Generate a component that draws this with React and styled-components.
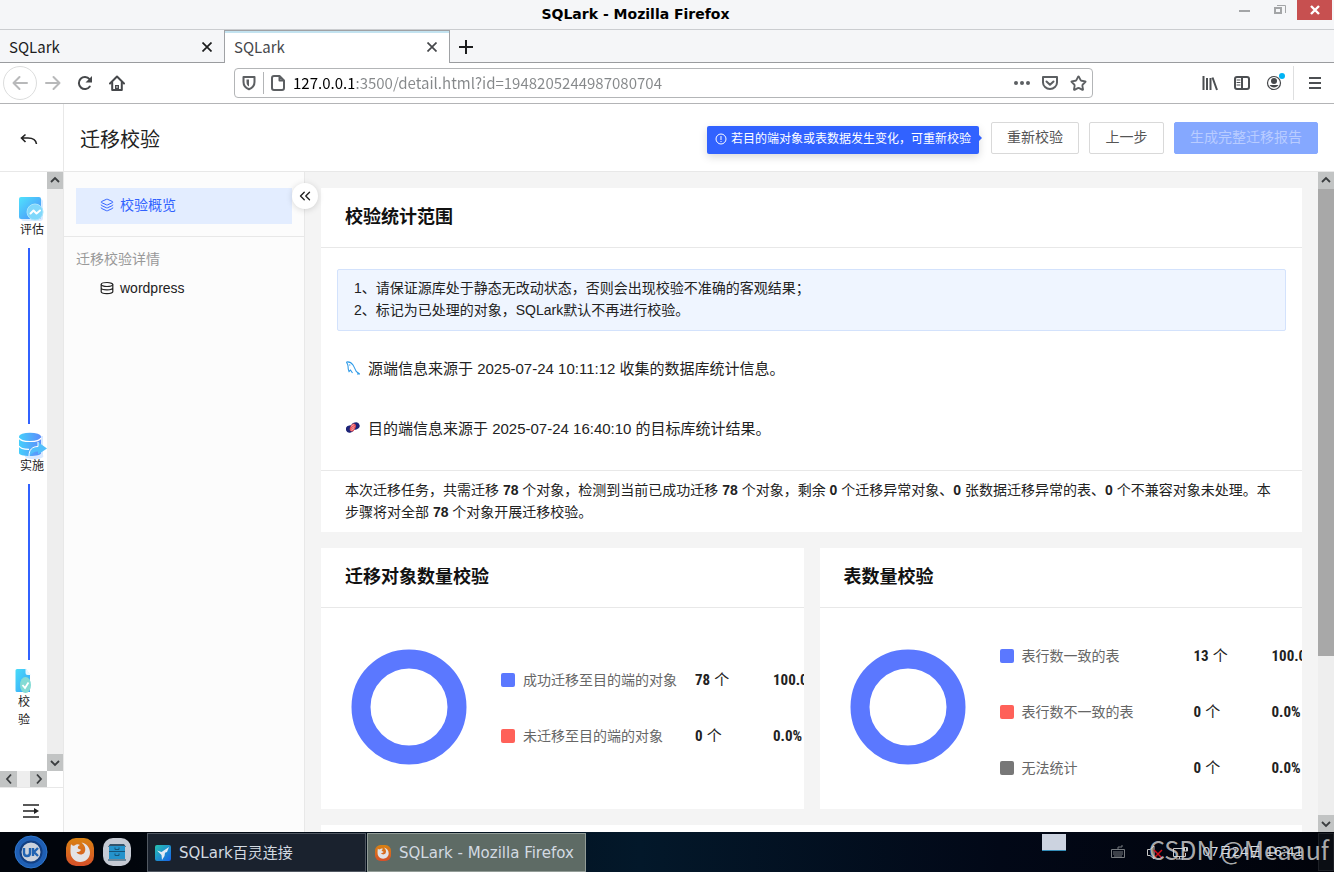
import styled, { createGlobalStyle, css } from "styled-components";
import { ChevronsLeft, Layers, Star } from "lucide-react";

const overviewNotes = [
  "1、请保证源库处于静态无改动状态，否则会出现校验不准确的客观结果；",
  "2、标记为已处理的对象，SQLark默认不再进行校验。",
];

const objectStats = [
  { label: "成功迁移至目的端的对象", count: 78, rate: "100.0%", color: "#5b78ff" },
  { label: "未迁移至目的端的对象", count: 0, rate: "0.0%", color: "#ff6159" },
];

const tableStats = [
  { label: "表行数一致的表", count: 13, rate: "100.0%", color: "#5b78ff" },
  { label: "表行数不一致的表", count: 0, rate: "0.0%", color: "#ff6159" },
  { label: "无法统计", count: 0, rate: "0.0%", color: "#777777" },
];

export default function App() {
  return (
    <>
      <GlobalStyle />
      <Screen>
        <TitleBar />
        <TabStrip />
        <NavigationBar />
        <Page>
          <PageHeader />
          <PageBody>
            <StepRail />
            <SideMenu />
            <Content />
          </PageBody>
        </Page>
        <Taskbar />
      </Screen>
    </>
  );
}

function TitleBar() {
  return (
    <StyledTitleBar>
      <WindowTitle>SQLark - Mozilla Firefox</WindowTitle>
      <WindowButtons>
        <WindowButton aria-label="最小化">
          <svg width="12" height="12" viewBox="0 0 12 12">
            <path d="M0 6h11v2H0z" fill="#a3a5a7" />
          </svg>
        </WindowButton>
        <WindowButton aria-label="还原">
          <svg width="12" height="12" viewBox="0 0 12 12" fill="none" stroke="#a3a5a7">
            <path d="M1 4h6v5H1z" strokeWidth="2" />
            <path d="M3 1.500h8.500V9" />
          </svg>
        </WindowButton>
        <WindowButton aria-label="关闭" $danger>
          <svg width="12" height="12" viewBox="0 0 12 12" stroke="#fff" strokeWidth="2.400">
            <path d="M2 2l8 8M10 2l-8 8" />
          </svg>
        </WindowButton>
      </WindowButtons>
    </StyledTitleBar>
  );
}

function TabStrip() {
  return (
    <Tabs>
      <Tab>
        <TabTitle>SQLark</TabTitle>
        <TabButton aria-label="关闭标签页">
          <CloseIcon />
        </TabButton>
      </Tab>
      <Tab $active>
        <TabTitle>SQLark</TabTitle>
        <TabButton aria-label="关闭标签页">
          <CloseIcon />
        </TabButton>
      </Tab>
      <NewTabButton aria-label="新建标签页">
        <svg width="14" height="14" viewBox="0 0 14 14" stroke="#1c1d1e" strokeWidth="2">
          <path d="M7 0v14M0 7h14" />
        </svg>
      </NewTabButton>
    </Tabs>
  );
}

function CloseIcon() {
  return (
    <svg width="10" height="10" viewBox="0 0 10 10" stroke="currentColor" strokeWidth="1.700">
      <path d="M.5.5l9 9M9.500.5l-9 9" />
    </svg>
  );
}

function NavigationBar() {
  return (
    <NavBar>
      <NavGroup>
        <BackButton aria-label="后退">
          <svg width="16" height="16" viewBox="0 0 16 16" {...line}>
            <path d="M15 8H1.500M7.500 2l-6 6 6 6" />
          </svg>
        </BackButton>
        <NavButton aria-label="前进" $muted>
          <svg width="16" height="16" viewBox="0 0 16 16" {...line}>
            <path d="M1 8h13.500M8.500 2l6 6-6 6" />
          </svg>
        </NavButton>
        <NavButton aria-label="刷新">
          <svg width="16" height="16" viewBox="0 0 16 16" {...line}>
            <path d="M12.800 11.500A6 6 0 1 1 12.500 4.200" />
            <path d="M15 1v6.500H8.500z" fill="currentColor" stroke="none" />
          </svg>
        </NavButton>
        <NavButton aria-label="主页">
          <svg width="16" height="16" viewBox="0 0 16 16" {...line}>
            <path d="M1 8.500l7-7 7 7" />
            <path d="M3.200 7.500V15h9.600V7.500" />
            <path d="M6 15v-5h4v5z" fill="currentColor" stroke="none" />
            <path d="M8 11.500v1" stroke="#fff" strokeWidth="1" />
          </svg>
        </NavButton>
      </NavGroup>
      <AddressBox>
        <ShieldCell>
          <svg width="14" height="16" viewBox="0 0 14 16" {...line}>
            <path d="M1.500 2h11v5c0 3.800-2.300 6-5.500 7.300C3.800 13 1.500 10.800 1.500 7z" />
            <path d="M7 4.500v7C5.300 10.600 4.500 9 4.500 7V4.500z" fill="currentColor" stroke="none" />
          </svg>
        </ShieldCell>
        <svg width="14" height="16" viewBox="0 0 14 16" {...line}>
          <path d="M3 1h5.500L13 5.500V13a2 2 0 0 1-2 2H3a2 2 0 0 1-2-2V3a2 2 0 0 1 2-2zM8.500 1v4.500H13" />
        </svg>
        <AddressInput
          aria-label="地址"
          defaultValue="127.0.0.1:3500/detail.html?id=1948205244987080704"
        />
        <AddressActions>
          <IconButton aria-label="页面操作">
            <svg width="16" height="16" viewBox="0 0 16 16" fill="currentColor">
              <circle cx="2" cy="8" r="2" />
              <circle cx="8" cy="8" r="2" />
              <circle cx="14" cy="8" r="2" />
            </svg>
          </IconButton>
          <IconButton aria-label="保存到 Pocket">
            <svg width="16" height="16" viewBox="0 0 16 16" {...line}>
              <path d="M1 2h14v5.500a7 6.500 0 0 1-14 0z" />
              <path d="M4.500 6.500L8 9.800l3.500-3.300" />
            </svg>
          </IconButton>
          <IconButton aria-label="收藏">
            <Star size={17} strokeWidth={2.600} />
          </IconButton>
        </AddressActions>
      </AddressBox>
      <BrowserTools>
        <IconButton aria-label="我的足迹">
          <svg width="16" height="16" viewBox="0 0 16 16" {...line} strokeLinecap="butt">
            <path d="M1.500 1v14M5 3v12M8.500 3v12M10.500 2.500L15 15" />
          </svg>
        </IconButton>
        <IconButton aria-label="侧栏">
          <svg width="16" height="16" viewBox="0 0 16 16" {...line}>
            <rect x="1" y="2" width="14" height="12" rx="2" />
            <path d="M8 2v12" />
            <path d="M3 5h3M3 7.500h3M3 10h3" strokeWidth="1" />
          </svg>
        </IconButton>
        <IconButton aria-label="账户">
          <svg width="16" height="16" viewBox="2 4 16 16" overflow="visible">
            <circle cx="10" cy="12" r="6.500" fill="none" stroke="#46484b" strokeWidth="1.200" />
            <circle cx="10" cy="10" r="3" fill="#46484b" />
            <path d="M5.500 14h9a5.300 5.300 0 0 1-9 0z" fill="#46484b" />
            <circle cx="18" cy="5" r="3" fill="#00b3f4" />
          </svg>
        </IconButton>
        <MenuCell>
          <IconButton aria-label="菜单">
            <svg width="14" height="14" viewBox="0 0 14 14" {...line} strokeLinecap="butt">
              <path d="M1 2h12M1 7h12M1 12h12" />
            </svg>
          </IconButton>
        </MenuCell>
      </BrowserTools>
    </NavBar>
  );
}

function PageHeader() {
  return (
    <Header>
      <ReturnButton aria-label="返回">
        <svg width="18" height="14" viewBox="0 0 18 14" fill="none" stroke="#222" strokeWidth="1.600">
          <path d="M5.500 1.500L1.500 5l4 4M1.500 5H8c5 0 8 2.500 8.500 6" />
        </svg>
      </ReturnButton>
      <PageTitle>迁移校验</PageTitle>
      <HeaderActions>
        <Hint role="tooltip">
          <svg width="12" height="12" viewBox="0 0 12 12" fill="none" stroke="#fff">
            <circle cx="6" cy="6" r="5" />
            <path d="M6 3v4M6 8v1" />
          </svg>
          若目的端对象或表数据发生变化，可重新校验
        </Hint>
        <Button>重新校验</Button>
        <Button>上一步</Button>
        <Button $primary disabled>
          生成完整迁移报告
        </Button>
      </HeaderActions>
    </Header>
  );
}

function StepRail() {
  return (
    <Rail>
      <RailScroller>
        <Steps>
          <Step>
            <AssessIcon />
            评估
          </Step>
          <StepLine />
          <Step>
            <DeployIcon />
            实施
          </Step>
          <StepLine />
          <Step $narrow>
            <CheckIcon />
            校验
          </Step>
        </Steps>
        <Scrollbar>
          <ScrollArrow direction="up" />
          <ScrollArrow direction="down" />
        </Scrollbar>
      </RailScroller>
      <BottomScrollbar>
        <ScrollArrow direction="left" />
        <ScrollArrow direction="right" />
      </BottomScrollbar>
      <ExpandButton aria-label="展开">
        <svg width="16" height="14" viewBox="0 0 16 14" stroke="#222" strokeWidth="1.400">
          <path d="M0 1h16M0 7h12M0 13h16" />
          <path d="M11 4l5 3-5 3z" fill="#222" stroke="none" />
        </svg>
      </ExpandButton>
    </Rail>
  );
}

function AssessIcon() {
  return (
    <svg width="28" height="25" viewBox="2 0 28 25" overflow="visible">
      <defs>
        <linearGradient id="assess" x1="0" y1="0" x2="1" y2="1">
          <stop offset="0" stopColor="#50e3fc" />
          <stop offset="1" stopColor="#4b8bfa" />
        </linearGradient>
      </defs>
      <rect x="5" y="3" width="22" height="22" rx="3" fill="#d8ebff" />
      <rect x="3" y="1" width="22" height="22" rx="2" fill="url(#assess)" />
      <circle cx="19" cy="16" r="8" fill="#80d8fb" stroke="#a9e5fc" />
      <path
        d="M14.500 17.500l3-3 3 3 3.500-3"
        fill="none"
        stroke="#fff"
        strokeWidth="2"
        strokeLinecap="round"
        strokeLinejoin="round"
      />
    </svg>
  );
}

function DeployIcon() {
  return (
    <svg width="28" height="25" viewBox="2 0 28 25" overflow="visible">
      <defs>
        <linearGradient id="deploy" x1="0" y1="0" x2="1" y2="0">
          <stop offset="0" stopColor="#45cffb" />
          <stop offset="1" stopColor="#5c8cfb" />
        </linearGradient>
      </defs>
      <path d="M6 4h21v19a9 3 0 0 1-18 2z" fill="#d8e9ff" />
      <path d="M3 4.500V21c0 1.800 4.500 3 11 3s11-1.200 11-3V4.500z" fill="url(#deploy)" />
      <ellipse cx="14" cy="4.500" rx="11" ry="3.800" fill="url(#deploy)" />
      <path d="M3 6c1 2.500 5 3.500 11 3.500S24 8.500 25 6" fill="none" stroke="#fff" strokeWidth="1.200" />
      <path d="M3 14c1 2.500 5 3.300 10 3.300" fill="none" stroke="#fff" strokeWidth="1.200" />
      <path
        d="M13 24c0-6 3-9.500 9-9.500V10l9 6.500-9 6v-3c-4 0-6 1.500-9 4.500z"
        fill="#52bffb"
      />
      <path d="M13 24c0-6 3-9.500 9-9.500V10" fill="none" stroke="#fff" />
    </svg>
  );
}

function CheckIcon() {
  return (
    <svg width="18" height="25" viewBox="1 0 18 25" overflow="visible">
      <defs>
        <linearGradient id="verify" x1="0" y1="0" x2="1" y2="1">
          <stop offset="0" stopColor="#48dcf9" />
          <stop offset="1" stopColor="#38a3f8" />
        </linearGradient>
      </defs>
      <path d="M3 1h9l4 6v17H3a1.500 1.500 0 0 1-1.500-1.500v-20A1.500 1.500 0 0 1 3 1z" fill="url(#verify)" />
      <path d="M11.500 0v5a2 2 0 0 0 2 2H17z" fill="#e8f8ff" />
      <ellipse cx="11.500" cy="17" rx="5.500" ry="8" fill="#84dbd4" />
      <path d="M8.500 17l2.500 3 3.500-5.500" fill="none" stroke="#fff" strokeWidth="1.800" />
    </svg>
  );
}

const arrowPaths = {
  up: "M2 7l4-4 4 4",
  down: "M2 4l4 4 4-4",
  left: "M8 1.500L4 6l4 4.500",
  right: "M4 1.500L8 6l-4 4.500",
};

function ScrollArrow({ direction }) {
  return (
    <ArrowButton aria-label={direction}>
      <svg width="12" height="12" viewBox="0 0 12 12" fill="none" stroke="#3a3d3f" strokeWidth="1.800">
        <path d={arrowPaths[direction]} />
      </svg>
    </ArrowButton>
  );
}

function SideMenu() {
  return (
    <Sidebar>
      <MenuTop>
        <MenuLink href="#overview" $active>
          <Layers size={14} strokeWidth={1.700} />
          校验概览
        </MenuLink>
      </MenuTop>
      <MenuHeading>迁移校验详情</MenuHeading>
      <MenuLink href="#wordpress">
        <svg width="14" height="14" viewBox="0 0 14 14" fill="none" stroke="#222" strokeWidth="1.200">
          <ellipse cx="7" cy="3.500" rx="5.800" ry="2" />
          <path d="M1.200 3.500v7.300c0 1 2.500 1.800 5.800 1.800s5.800-.8 5.800-1.800V3.500M1.200 7c0 1 2.500 1.800 5.800 1.800s5.800-.8 5.800-1.800" />
        </svg>
        wordpress
      </MenuLink>
      <CollapseButton aria-label="收起">
        <ChevronsLeft size={18} strokeWidth={1.800} />
      </CollapseButton>
    </Sidebar>
  );
}

function Content() {
  return (
    <Main>
      <Cards>
        <Card>
          <CardTitle>校验统计范围</CardTitle>
          <ScopeBody>
            <Notice>
              {overviewNotes.map((note) => (
                <p key={note}>{note}</p>
              ))}
            </Notice>
            <Source>
              <svg width="14" height="16" viewBox="0 0 14 16" fill="none" stroke="#2f9be8" strokeWidth="1.100">
                <path d="M.5 1c3-.5 5 .8 6.500 3 1.500 2.500 2 4 3 6 .5 1 2 1.500 3.500 3l-2.500 0" />
                <path d="M.5 1c.5 1.500 1.500 2.500 1.500 4s.2 4 1 5.500l1.500-1.500 2 3" />
                <path d="M3.500 3.500l.5 1" />
              </svg>
              源端信息来源于 2025-07-24 10:11:12 收集的数据库统计信息。
            </Source>
            <Source>
              <svg width="14" height="16" viewBox="0 0 14 16">
                <ellipse cx="4" cy="8" rx="4.200" ry="3.500" transform="rotate(-15 4 8)" fill="#1d2478" />
                <ellipse cx="9.500" cy="5" rx="4.200" ry="3.500" transform="rotate(-15 9.500 5)" fill="#1d2478" />
                <ellipse cx="6.800" cy="6.500" rx="2.600" ry="4.200" transform="rotate(25 6.800 6.500)" fill="#e8545c" />
                <path d="M5 5.500l3-2M5 9.500l3-2M5.500 7.500l3-2" stroke="#fbd5d5" strokeWidth=".6" />
              </svg>
              目的端信息来源于 2025-07-24 16:40:10 的目标库统计结果。
            </Source>
          </ScopeBody>
          <Summary>
            本次迁移任务，共需迁移 <b>78</b> 个对象，检测到当前已成功迁移 <b>78</b> 个对象，剩余 <b>0</b>{" "}
            个迁移异常对象、<b>0</b> 张数据迁移异常的表、<b>0</b> 个不兼容对象未处理。本步骤将对全部{" "}
            <b>78</b> 个对象开展迁移校验。
          </Summary>
        </Card>
        <CardRow>
          <StatCard title="迁移对象数量校验" items={objectStats} />
          <StatCard title="表数量校验" items={tableStats} />
        </CardRow>
        <Card />
      </Cards>
      <Scrollbar>
        <ScrollArrow direction="up" />
        <ScrollThumb />
        <ScrollArrow direction="down" />
      </Scrollbar>
    </Main>
  );
}

function StatCard({ title, items }) {
  return (
    <Card>
      <CardTitle>{title}</CardTitle>
      <StatBody>
        <svg width="116" height="116" viewBox="0 0 116 116">
          <circle cx="58" cy="58" r="48" fill="none" stroke="#5b78ff" strokeWidth="19" />
        </svg>
        <StatTable $long={items.length > 2}>
          <tbody>
            {items.map((item) => (
              <tr key={item.label}>
                <LabelCell>
                  <Swatch $color={item.color} />
                  {item.label}
                </LabelCell>
                <CountCell>
                  <Figure>{item.count}</Figure> 个
                </CountCell>
                <td>
                  <Figure>{item.rate}</Figure>
                </td>
              </tr>
            ))}
          </tbody>
        </StatTable>
      </StatBody>
    </Card>
  );
}

function FirefoxIcon({ size }) {
  return (
    <svg width={size} height={size} viewBox="0 0 28 28">
      <defs>
        <linearGradient id="fox" x1="0" y1="0" x2="0" y2="1">
          <stop offset="0" stopColor="#d98212" />
          <stop offset="1" stopColor="#d6502a" />
        </linearGradient>
      </defs>
      <rect width="28" height="28" rx="10" fill="url(#fox)" />
      <path
        d="M5 6c1 1.500 2 2 3.500 1.500 2-1.500 4-1.500 5.500-.5-2 1-2.500 2-2 3.500l3 1.200c-.5 1.800-2 2.200-4.500 2.300 1 3 6 3.500 8 .5 1.800-3.500.5-7-3-10 5 1 8.500 5 8.500 10 0 5.500-4.300 9.500-9.800 9.500S4.500 19.500 4.500 14c0-3 0-5 .5-8z"
        fill="#e3e3e6"
      />
    </svg>
  );
}

function Taskbar() {
  return (
    <Bar>
      <Launchers>
        <IconButton aria-label="开始菜单">
          <svg width="34" height="34" viewBox="0 0 34 34">
            <circle cx="17" cy="17" r="16" fill="#1f5fb4" stroke="#2f78cf" />
            <circle cx="17" cy="17" r="10.500" fill="#ccd2dc" stroke="#123f82" strokeWidth="2" />
            <path
              d="M10 13v5q0 3 3 3t3-3v-5M19 13v8M24 13l-4 4 4 4"
              fill="none"
              stroke="#2163b2"
              strokeWidth="2.400"
            />
          </svg>
        </IconButton>
        <IconButton aria-label="Firefox">
          <FirefoxIcon size={28} />
        </IconButton>
        <IconButton aria-label="文件管理器">
          <svg width="28" height="28" viewBox="0 0 28 28">
            <rect width="28" height="28" rx="10" fill="#c5cad4" />
            <path d="M7 6h14l2 3H5z" fill="#33536b" />
            <path d="M6 8h16v13H6z" fill="#2593cc" />
            <path d="M6 13.500h16M12 9.500v2h4v-2M12 15.500v2h4v-2" stroke="#17547a" fill="none" />
            <path d="M5 22h18" stroke="#4f7086" strokeWidth="1.500" />
          </svg>
        </IconButton>
      </Launchers>
      <TaskButton>
        <svg width="16" height="16" viewBox="0 0 16 16">
          <defs>
            <linearGradient id="lark" x1="0" y1="0" x2="1" y2="1">
              <stop offset="0" stopColor="#27c2b0" />
              <stop offset="1" stopColor="#1762e8" />
            </linearGradient>
          </defs>
          <rect width="16" height="16" rx="2" fill="url(#lark)" />
          <path d="M2 5.500l4.500 1.500L14 2l-2 5-2 .8L9.500 11 7 15l-.5-5z" fill="#e3ebf5" />
        </svg>
        SQLark百灵连接
      </TaskButton>
      <TaskButton $active>
        <FirefoxIcon size={16} />
        SQLark - Mozilla Firefox
      </TaskButton>
      <Tray>
        <WorkspacePreview aria-label="工作区" />
        <svg width="14" height="14" viewBox="0 0 14 14" fill="none" stroke="#777b80">
          <path d="M.5 4.500h13v8H.5zM7 4.500V2h4V0M2 7h10M2 9h10M3 11h8" />
        </svg>
        <TrayIcons>
          <svg width="18" height="16" viewBox="0 0 18 16" fill="none" stroke="#c8c8c8">
            <path d="M1.500 5.500v6H4l4 3.500V2L4 5.500z" />
            <path d="M8 6l8 8M16 6l-8 8" stroke="#d00f1c" strokeWidth="1.500" />
          </svg>
          <svg width="16" height="16" viewBox="0 0 16 16" fill="none" stroke="#c8c8c8">
            <path d="M11 4.500H1.500v8h12V9M7.500 12.500V15M4 15h7M12.500 7V3M14.500 7V3M11.500 3.500h4V7h-4z" />
          </svg>
        </TrayIcons>
        <Clock>07月24日 16:41</Clock>
        <DesktopButton aria-label="显示桌面" />
      </Tray>
      <Watermark>CSDN @Meaauf</Watermark>
    </Bar>
  );
}

const line = {
  fill: "none",
  stroke: "currentColor",
  strokeWidth: 2,
  strokeLinecap: "round",
  strokeLinejoin: "round",
};

const GlobalStyle = createGlobalStyle`
  * {
    box-sizing: border-box;
  }

  body {
    margin: 0;
    overflow: hidden;
    color: #222222;
    font: 14px/22px "Liberation Sans", "Noto Sans CJK SC", sans-serif;
  }

  p, h1, h2 {
    margin: 0;
  }

  button {
    padding: 0;
    border: none;
    background: none;
    font: inherit;
    color: inherit;
  }

  svg {
    flex-shrink: 0;
  }
`;

const Screen = styled.div`
  height: 100vh;
  display: flex;
  flex-direction: column;
  background-color: #ffffff;
`;

const StyledTitleBar = styled.header`
  flex: none;
  height: 30px;
  padding-right: 2px;
  display: grid;
  grid-template-columns: 44px 1fr 105px;
  background-color: #f5f6f8;
  border-bottom: 1px solid #cbcdd0;
`;

const WindowTitle = styled.div`
  grid-column: 2;
  text-align: center;
  font: bold 14px/28px "DejaVu Sans", sans-serif;
  color: #000000;
`;

const WindowButtons = styled.div`
  display: flex;
`;

const WindowButton = styled.button`
  width: 35px;
  height: 20px;
  display: flex;
  align-items: center;
  justify-content: center;
  background-color: ${({ $danger }) => ($danger ? "#c75050" : "transparent")};
`;

const Tabs = styled.div`
  flex: none;
  height: 33px;
  display: flex;
  background-color: #f5f6f8;
  box-shadow: inset 0 -1px #9a9c9f;
`;

const Tab = styled.div`
  width: 225px;
  padding: 0 12px 0 9px;
  display: flex;
  align-items: center;
  justify-content: space-between;
  color: #1c1d1e;
  border-right: 1px solid #a0a2a5;

  ${({ $active }) =>
    $active &&
    css`
      color: #46484b;
      background-color: #ffffff;
      box-shadow: inset 0 1px #a0a2a5, inset 0 3px #c3e3f0;
    `}
`;

const TabTitle = styled.span`
  font: 15px/22px "Noto Sans CJK SC", sans-serif;
`;

const TabButton = styled.button`
  display: flex;
`;

const NewTabButton = styled.button`
  width: 32px;
  display: flex;
  align-items: center;
  justify-content: center;
`;

const NavBar = styled.nav`
  flex: none;
  height: 41px;
  display: flex;
  align-items: center;
  color: #4c4f52;
  border-bottom: 1px solid #b3b4b6;
`;

const NavGroup = styled.div`
  width: 234px;
  padding-left: 3px;
  display: flex;
  align-items: center;
`;

const NavButton = styled.button`
  width: 32px;
  height: 32px;
  display: flex;
  align-items: center;
  justify-content: center;
  color: ${({ $muted }) => ($muted ? "#b8b9ba" : "#46484b")};
`;

const BackButton = styled(NavButton)`
  width: 34px;
  height: 34px;
  color: #b8b9ba;
  border: 1px solid #dcdddd;
  border-radius: 50%;
`;

const AddressBox = styled.div`
  flex: 1;
  height: 30px;
  padding-right: 5px;
  display: flex;
  align-items: center;
  color: #5c5f62;
  border: 1px solid #b3b5b7;
  border-radius: 4px;
`;

const ShieldCell = styled.span`
  width: 29px;
  height: 22px;
  margin-right: 7px;
  padding-left: 7px;
  display: flex;
  align-items: center;
  border-right: 1px solid #b3b5b7;
`;

const AddressInput = styled.input`
  flex: 1;
  min-width: 0;
  margin-left: 8px;
  padding: 0;
  border: none;
  outline: none;
  font: 15px/24px "Noto Sans CJK SC", sans-serif;
  color: #85888a;
  background: linear-gradient(to right, #000000 61px, #85888a 61px) text;
  -webkit-text-fill-color: transparent;
`;

const AddressActions = styled.div`
  display: flex;
  align-items: center;
  gap: 12px;
`;

const IconButton = styled.button`
  display: flex;
  align-items: center;
  justify-content: center;
`;

const BrowserTools = styled.div`
  width: 241px;
  display: flex;
  align-items: center;
  justify-content: flex-end;
  gap: 16px;
`;

const MenuCell = styled.div`
  width: 41px;
  height: 34px;
  margin-left: -5px;
  padding-left: 2px;
  display: flex;
  align-items: center;
  justify-content: center;
  border-left: 1px solid #dedfe0;
`;

const Page = styled.div`
  flex: 1;
  min-height: 0;
  display: flex;
  flex-direction: column;
`;

const Header = styled.header`
  flex: none;
  height: 68px;
  padding-right: 16px;
  display: flex;
  align-items: center;
  border-bottom: 1px solid #e8e8e8;
`;

const ReturnButton = styled.button`
  width: 64px;
  height: 100%;
  padding: 4px 6px 0 0;
  display: flex;
  align-items: center;
  justify-content: center;
  border-right: 1px solid #e8e8e8;
`;

const PageTitle = styled.h1`
  flex: 1;
  padding: 4px 0 0 16px;
  font-size: 20px;
  font-weight: 400;
  line-height: 28px;
`;

const HeaderActions = styled.div`
  display: flex;
  align-items: flex-end;
  gap: 10px;
`;

const Hint = styled.div`
  position: relative;
  height: 28px;
  margin-right: 2px;
  padding: 0 8px 2px;
  display: flex;
  align-items: center;
  gap: 4px;
  font-size: 12px;
  color: #ffffff;
  background-color: #3162ff;
  border-radius: 2px;
  box-shadow: 0 3px 8px rgba(0, 0, 0, 0.15);

  &::after {
    content: "";
    position: absolute;
    left: 100%;
    top: 9px;
    border: 3px solid transparent;
    border-left-color: #3162ff;
  }
`;

const Button = styled.button`
  height: 32px;
  min-width: 75px;
  padding: 0 15px 2px;
  font-size: 14px;
  color: #555555;
  background-color: #ffffff;
  border: 1px solid #d9d9d9;
  border-radius: 2px;

  ${({ $primary }) =>
    $primary &&
    css`
      color: #b9ccff;
      background-color: #85a8ff;
      border-color: #85a8ff;
    `}
`;

const PageBody = styled.div`
  flex: 1;
  min-height: 0;
  display: flex;
`;

const Rail = styled.aside`
  width: 64px;
  flex: none;
  display: flex;
  flex-direction: column;
  border-right: 1px solid #e8e8e8;
`;

const RailScroller = styled.div`
  flex: 1;
  min-height: 0;
  display: flex;
`;

const Steps = styled.div`
  flex: 1;
  padding: 16px 0 0 16px;
  overflow: hidden;
`;

const Step = styled.div`
  width: ${({ $narrow }) => ($narrow ? "16px" : "32px")};
  min-height: 60px;
  padding: 8px 0;
  display: flex;
  flex-direction: column;
  align-items: center;
  text-align: center;
  word-break: break-all;
  font-size: 12px;
  line-height: 18px;
`;

const StepLine = styled.div`
  width: 2px;
  height: 176px;
  margin-left: 12px;
  background-color: #3162ff;
`;

const Scrollbar = styled.div`
  width: 16px;
  flex: none;
  display: flex;
  flex-direction: column;
  justify-content: space-between;
  background-color: #eeeeee;
`;

const ArrowButton = styled.button`
  min-width: 16px;
  height: 17px;
  display: flex;
  align-items: center;
  justify-content: center;
  background-color: #c2c4c4;
`;

const BottomScrollbar = styled.div`
  width: 47px;
  height: 16px;
  flex: none;
  display: flex;
  justify-content: space-between;
  background-color: #eeeeee;

  ${ArrowButton} {
    width: 17px;
    height: 16px;
  }
`;

const ScrollThumb = styled.div`
  height: 467px;
  margin-bottom: auto;
  background-color: #a8a8a8;
`;

const ExpandButton = styled.button`
  height: 45px;
  padding: 2px 2px 0 0;
  display: flex;
  align-items: center;
  justify-content: center;
  border-top: 1px solid #e8e8e8;
`;

const Sidebar = styled.aside`
  position: relative;
  width: 241px;
  flex: none;
  background-color: #fcfcfc;
  border-right: 1px solid #e8e8e8;
`;

const MenuTop = styled.div`
  padding: 16px 12px 12px;
  border-bottom: 1px solid #e8e8e8;
`;

const MenuLink = styled.a`
  padding-left: 36px;
  display: flex;
  align-items: center;
  gap: 6px;
  color: #222222;
  text-decoration: none;

  ${({ $active }) =>
    $active &&
    css`
      height: 36px;
      padding: 0 0 2px 24px;
      color: #3162ff;
      background-color: #e3edff;
    `}
`;

const MenuHeading = styled.h2`
  padding: 11px 12px 7px;
  font-size: 14px;
  font-weight: 400;
  color: #999999;
`;

const CollapseButton = styled.button`
  position: absolute;
  top: 11px;
  right: -14px;
  z-index: 1;
  width: 26px;
  height: 26px;
  display: flex;
  align-items: center;
  justify-content: center;
  background-color: #ffffff;
  border-radius: 50%;
  box-shadow: 0 1px 6px rgba(0, 0, 0, 0.15);
`;

const Main = styled.main`
  flex: 1;
  min-width: 0;
  display: flex;
  background-color: #f4f4f4;
`;

const Cards = styled.div`
  flex: 1;
  min-width: 0;
  padding: 16px 16px 0;
  display: flex;
  flex-direction: column;
  gap: 16px;
  overflow: hidden;
`;

const Card = styled.section`
  min-width: 0;
  min-height: 60px;
  flex: none;
  overflow: hidden;
  background-color: #ffffff;
`;

const CardRow = styled.div`
  display: grid;
  grid-template-columns: 1fr 1fr;
  gap: 16px;
`;

const CardTitle = styled.h2`
  height: 60px;
  padding: 0 24px;
  font-size: 18px;
  line-height: 58px;
  color: #111111;
  border-bottom: 1px solid #e8e8e8;
`;

const ScopeBody = styled.div`
  padding: 21px 16px 11px;
  border-bottom: 1px solid #e8e8e8;
`;

const Notice = styled.div`
  margin-bottom: 8px;
  padding: 7px 16px 9px;
  background-color: #eff5ff;
  border: 1px solid #d3e2fc;
  border-radius: 2px;
`;

const Source = styled.p`
  height: 60px;
  padding: 0 9px;
  display: flex;
  align-items: center;
  gap: 8px;
  font-size: 15px;
`;

const Summary = styled.p`
  padding: 8px 24px 9px;
`;

const StatBody = styled.div`
  height: 201px;
  padding: 0 0 4px 30px;
  display: flex;
  align-items: center;
  gap: 34px;
`;

const StatTable = styled.table`
  flex: none;
  margin-top: ${({ $long }) => ($long ? "10px" : "2px")};
  border-spacing: 0;

  td {
    height: 56px;
    padding: 0;
    white-space: nowrap;
  }
`;

const LabelCell = styled.td`
  width: 194px;
  color: #666666;
`;

const CountCell = styled.td`
  width: 78px;
  font-size: 15px;
`;

const Swatch = styled.span`
  display: inline-block;
  width: 14px;
  height: 14px;
  margin-right: 8px;
  vertical-align: -2px;
  background-color: ${({ $color }) => $color};
  border-radius: 2px;
`;

const Figure = styled.b`
  font-family: "Roboto Condensed", "Liberation Sans Narrow", "Liberation Sans", sans-serif;
  font-size: 15px;
`;

const Bar = styled.footer`
  position: relative;
  flex: none;
  height: 40px;
  display: flex;
  color: #d3dae2;
  font: 15px/20px "DejaVu Sans", "Noto Sans CJK SC", sans-serif;
  background: linear-gradient(to right, #01050c 10%, #03182a 48%, #020817 75%, #01030a);
`;

const Launchers = styled.div`
  width: 147px;
  padding-left: 14px;
  display: flex;
  align-items: center;
  gap: 9px;

  button:first-child {
    margin-right: 9px;
  }
`;

const TaskButton = styled.button`
  width: 219px;
  margin: 1px 1px 0 0;
  padding-left: 7px;
  display: flex;
  align-items: center;
  gap: 8px;
  white-space: nowrap;
  background-color: ${({ $active }) => ($active ? "#5e6b65" : "#1a222e")};
  border: 1px solid ${({ $active }) => ($active ? "#929c97" : "#515862")};
`;

const Tray = styled.div`
  flex: 1;
  display: flex;
  align-items: center;
  justify-content: flex-end;
`;

const WorkspacePreview = styled.button`
  width: 24px;
  height: 17px;
  margin: 2px 45px auto 0;
  background-color: #ccd3e0;
  border-bottom: 1px solid #358db8;
`;

const TrayIcons = styled.div`
  margin: 0 14px 0 21px;
  display: flex;
  gap: 8px;
`;

const Clock = styled.time`
  font-size: 13px;
`;

const DesktopButton = styled.button`
  width: 16px;
  height: 38px;
  margin-left: 15px;
  background-color: #0b0e14;
  border: 1px solid #1d2026;
`;

const Watermark = styled.span`
  position: absolute;
  right: 5px;
  bottom: 6px;
  font: 25px/34px "Noto Sans CJK SC", sans-serif;
  color: rgba(215, 215, 215, 0.8);
`;
